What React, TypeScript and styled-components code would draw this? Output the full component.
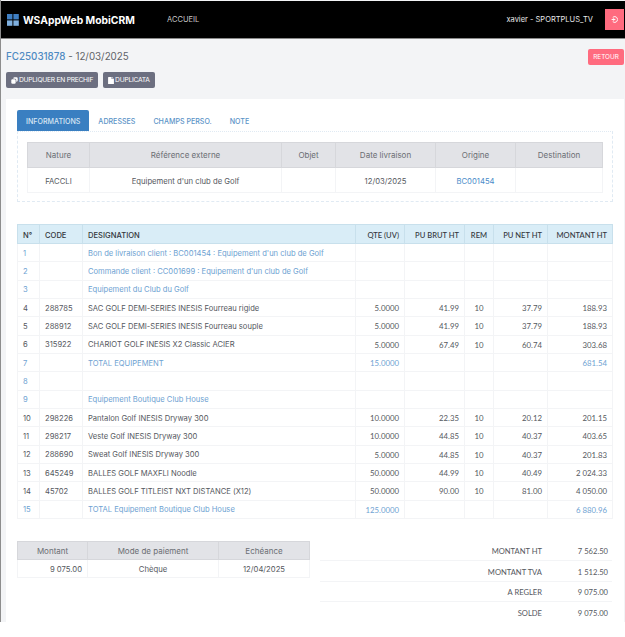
import React from 'react';
import styled, { createGlobalStyle } from 'styled-components';

type Align = 'left' | 'center' | 'right';

interface Line {
  n: number;
  code?: string;
  label?: string;
  qte?: string;
  brut?: string;
  rem?: string;
  net?: string;
  total?: string;
  link?: boolean;
}

const LINES: Line[] = [
  { n: 1, label: "Bon de livraison client : BC001454 : Equipement d'un club de Golf", link: true },
  { n: 2, label: "Commande client : CC001699 : Equipement d'un club de Golf", link: true },
  { n: 3, label: 'Equipement du Club du Golf', link: true },
  { n: 4, code: '288785', label: 'SAC GOLF DEMI-SERIES INESIS Fourreau rigide', qte: '5.0000', brut: '41.99', rem: '10', net: '37.79', total: '188.93' },
  { n: 5, code: '288912', label: 'SAC GOLF DEMI-SERIES INESIS Fourreau souple', qte: '5.0000', brut: '41.99', rem: '10', net: '37.79', total: '188.93' },
  { n: 6, code: '315922', label: 'CHARIOT GOLF INESIS X2 Classic ACIER', qte: '5.0000', brut: '67.49', rem: '10', net: '60.74', total: '303.68' },
  { n: 7, label: 'TOTAL EQUIPEMENT', qte: '15.0000', total: '681.54', link: true },
  { n: 8, link: true },
  { n: 9, label: 'Equipement Boutique Club House', link: true },
  { n: 10, code: '298226', label: 'Pantalon Golf INESIS Dryway 300', qte: '10.0000', brut: '22.35', rem: '10', net: '20.12', total: '201.15' },
  { n: 11, code: '298217', label: 'Veste Golf INESIS Dryway 300', qte: '10.0000', brut: '44.85', rem: '10', net: '40.37', total: '403.65' },
  { n: 12, code: '288690', label: 'Sweat Golf INESIS Dryway 300', qte: '5.0000', brut: '44.85', rem: '10', net: '40.37', total: '201.83' },
  { n: 13, code: '645249', label: 'BALLES GOLF MAXFLI Noodle', qte: '50.0000', brut: '44.99', rem: '10', net: '40.49', total: '2 024.33' },
  { n: 14, code: '45702', label: 'BALLES GOLF TITLEIST NXT DISTANCE (X12)', qte: '50.0000', brut: '90.00', rem: '10', net: '81.00', total: '4 050.00' },
  { n: 15, label: 'TOTAL Equipement Boutique Club House', qte: '125.0000', total: '6 880.96', link: true },
];

const TOTALS = [
  ['MONTANT HT', '7 562.50'],
  ['MONTANT TVA', '1 512.50'],
  ['A REGLER', '9 075.00'],
  ['SOLDE', '9 075.00'],
];

const INFO_COLUMNS = [62, 192, 54, 100, 80, 87];
const LINE_COLUMNS = [22, 43, 273, 49, 60, 29, 54, 65];
const PAYMENT_COLUMNS = [70, 131, 91];

function Columns({ widths }: { widths: number[] }) {
  return (
    <colgroup>
      {widths.map((width, index) => (
        <col key={index} width={width} />
      ))}
    </colgroup>
  );
}

export default function App() {
  return (
    <Page>
      <GlobalStyle />
      <TopBar>
        <Brand>
          <svg width="12" height="12" viewBox="0 0 12 12">
            <rect x="0" y="0" width="5.4" height="5.4" fill="#3f7fc4" />
            <rect x="6.4" y="0" width="5.4" height="5.4" fill="#3f7fc4" />
            <rect x="0" y="6.4" width="5.4" height="5.4" fill="#7fb0e0" />
            <rect x="6.4" y="6.4" width="5.4" height="5.4" fill="#7fb0e0" />
          </svg>
          WSAppWeb MobiCRM
        </Brand>
        <NavLink>ACCUEIL</NavLink>
        <UserName>xavier - SPORTPLUS_TV</UserName>
        <LogoutButton aria-label="Déconnexion">
          <svg width="7" height="7" viewBox="0 0 12 12" fill="none" stroke="#fff" strokeWidth="1.6">
            <path d="M3 2.2A5 5 0 1 1 3 9.8" />
            <path d="M1 6h6.5M5.5 4l-2.500 2 2.500 2" />
          </svg>
        </LogoutButton>
      </TopBar>
      <Content>
        <TitleRow>
          <Title>
            <strong>FC25031878</strong> - 12/03/2025
          </Title>
          <BackButton>RETOUR</BackButton>
        </TitleRow>
        <Actions>
          <ActionButton>
            <svg width="7" height="7" viewBox="0 0 12 12" fill="#fff">
              <rect x="0.5" y="4" width="7.5" height="7.5" rx="2" />
              <path d="M4 3V2.5A2 2 0 0 1 6 .5h3.500a2 2 0 0 1 2 2V6a2 2 0 0 1-2 2H9V5a2 2 0 0 0-2-2z" />
            </svg>
            DUPLIQUER EN PRECHIF
          </ActionButton>
          <ActionButton>
            <svg width="6" height="7" viewBox="0 0 10 12" fill="#fff">
              <path d="M1 0h5v3.500h4V12H0V1a1 1 0 0 1 1-1zM7 0l3 2.500H7z" />
            </svg>
            DUPLICATA
          </ActionButton>
        </Actions>
        <Card>
          <Tabs>
            <Tab $active>INFORMATIONS</Tab>
            <Tab>ADRESSES</Tab>
            <Tab>CHAMPS PERSO.</Tab>
            <Tab>NOTE</Tab>
          </Tabs>
          <TabPane>
            <GreyTable>
              <Columns widths={INFO_COLUMNS} />
              <thead>
                <tr>
                  <GreyHead $height={25}>Nature</GreyHead>
                  <GreyHead $height={25}>Référence externe</GreyHead>
                  <GreyHead $height={25}>Objet</GreyHead>
                  <GreyHead $height={25}>Date livraison</GreyHead>
                  <GreyHead $height={25}>Origine</GreyHead>
                  <GreyHead $height={25}>Destination</GreyHead>
                </tr>
              </thead>
              <tbody>
                <tr>
                  <GreyCell $height={25}>FACCLI</GreyCell>
                  <GreyCell $height={25}>Equipement d'un club de Golf</GreyCell>
                  <GreyCell $height={25} />
                  <GreyCell $height={25}>12/03/2025</GreyCell>
                  <GreyCell $height={25} $link>BC001454</GreyCell>
                  <GreyCell $height={25} />
                </tr>
              </tbody>
            </GreyTable>
          </TabPane>
          <LinesTable>
            <Columns widths={LINE_COLUMNS} />
            <thead>
              <tr>
                <LineHead>N°</LineHead>
                <LineHead>CODE</LineHead>
                <LineHead>DESIGNATION</LineHead>
                <LineHead $align="right">QTE (UV)</LineHead>
                <LineHead $align="right">PU BRUT HT</LineHead>
                <LineHead $align="center">REM</LineHead>
                <LineHead $align="right">PU NET HT</LineHead>
                <LineHead $align="right">MONTANT HT</LineHead>
              </tr>
            </thead>
            <tbody>
              {LINES.map((line) => (
                <LineRow key={line.n} $link={line.link}>
                  <LineCell>{line.n}</LineCell>
                  <LineCell>{line.code}</LineCell>
                  <LineCell>{line.label}</LineCell>
                  <LineCell $align="right" $number>{line.qte}</LineCell>
                  <LineCell $align="right" $number>{line.brut}</LineCell>
                  <LineCell $align="center" $number>{line.rem}</LineCell>
                  <LineCell $align="right" $number>{line.net}</LineCell>
                  <LineCell $align="right" $number>{line.total}</LineCell>
                </LineRow>
              ))}
            </tbody>
          </LinesTable>
          <Summary>
            <PaymentTable>
              <Columns widths={PAYMENT_COLUMNS} />
              <thead>
                <tr>
                  <GreyHead $height={18} $shifted>Montant</GreyHead>
                  <GreyHead $height={18} $shifted>Mode de paiement</GreyHead>
                  <GreyHead $height={18} $shifted>Echéance</GreyHead>
                </tr>
              </thead>
              <tbody>
                <tr>
                  <GreyCell $height={18} $align="right">9 075.00</GreyCell>
                  <GreyCell $height={18}>Chèque</GreyCell>
                  <GreyCell $height={18}>12/04/2025</GreyCell>
                </tr>
              </tbody>
            </PaymentTable>
            <Totals>
              {TOTALS.map(([label, value]) => (
                <TotalRow key={label}>
                  <TotalLabel>{label}</TotalLabel>
                  <TotalValue>{value}</TotalValue>
                </TotalRow>
              ))}
            </Totals>
          </Summary>
        </Card>
      </Content>
    </Page>
  );
}

const GlobalStyle = createGlobalStyle`
  html, body {
    margin: 0;
    padding: 0;
    background: #ffffff;
  }

  * {
    box-sizing: border-box;
  }
`;

const Page = styled.div`
  width: 625px;
  height: 622px;
  overflow: hidden;
  padding-top: 1px;
  border-left: 1px solid #8d8d8d;
  background: #f3f4f6;
  font-family: "Inter", "Liberation Sans", sans-serif;
  font-size: 7.7px;
  color: #55585e;
`;

const TopBar = styled.header`
  display: flex;
  align-items: center;
  height: 38px;
  padding: 0 1px 0 6px;
  background: #000000;
  border-bottom: 1px solid #8a8a8a;
`;

const Brand = styled.div`
  display: flex;
  align-items: center;
  gap: 4px;
  width: 160px;
  font-size: 10.3px;
  font-weight: 700;
  color: #ffffff;
`;

const NavLink = styled.a`
  font-size: 7.5px;
  color: #c8c8c8;
`;

const UserName = styled.span`
  margin-left: auto;
  margin-right: 12px;
  font-size: 7.5px;
  color: #e8e8e8;
`;

const LogoutButton = styled.button`
  display: flex;
  align-items: center;
  justify-content: center;
  width: 19px;
  height: 21px;
  padding: 0;
  border: 0;
  background: #ff6b7f;
`;

const Content = styled.main`
  padding: 10px 1px 0 5px;
`;

const TitleRow = styled.div`
  display: flex;
  justify-content: space-between;
  align-items: flex-start;
  height: 23px;
`;

const Title = styled.h1`
  margin: 1px 0 0;
  font-size: 9.8px;
  font-weight: 400;
  line-height: 14px;
  color: #5f6368;

  strong {
    font-weight: 500;
    color: #4f8ac2;
  }
`;

const BackButton = styled.button`
  width: 36px;
  height: 16px;
  padding: 0;
  border: 0;
  border-radius: 2px;
  background: #ff6b7f;
  font: 400 6.4px "Inter", sans-serif;
  color: #ffffff;
`;

const Actions = styled.div`
  display: flex;
  gap: 5px;
  height: 27px;
`;

const ActionButton = styled.button`
  display: flex;
  align-items: center;
  gap: 1px;
  height: 16px;
  padding: 0 5px;
  border: 0;
  border-radius: 2px;
  background: #6c6f80;
  font: 400 6.7px "Inter", sans-serif;
  letter-spacing: -0.25px;
  color: #ffffff;
`;

const Card = styled.section`
  height: 523px;
  padding: 11px 11px 0;
  background: #ffffff;
`;

const Tabs = styled.nav`
  display: flex;
  height: 21px;
`;

const Tab = styled.a<{ $active?: boolean }>`
  display: flex;
  align-items: center;
  padding: 1px 9px 0;
  border-radius: 2px 2px 0 0;
  background: ${(props) => (props.$active ? '#3a7fc1' : 'transparent')};
  font-size: 7.1px;
  font-weight: 500;
  color: ${(props) => (props.$active ? '#d8e6f3' : '#5b93c7')};
`;

const TabPane = styled.div`
  width: 596px;
  height: 71px;
  padding: 10px 9px;
  border: 1px dashed #e0eaf3;
  border-top-style: dotted;
`;

const BaseTable = styled.table`
  width: 595px;
  border-collapse: collapse;
  table-layout: fixed;
`;

const GreyTable = styled(BaseTable)`
  width: 575px;
`;

const PaymentTable = styled(BaseTable)`
  width: 292px;
  flex: none;
`;

const GreyHead = styled.th<{ $height: number; $shifted?: boolean }>`
  height: ${(props) => props.$height}px;
  padding: ${(props) => (props.$shifted ? '1px' : '0')} 3px 0;
  background: #e2e3e7;
  border: 1px solid #d6d7db;
  font-size: 8px;
  font-weight: 400;
  color: #6b6e73;
`;

const GreyCell = styled.td<{ $height: number; $align?: Align; $link?: boolean }>`
  height: ${(props) => props.$height}px;
  padding: 2px 5px 0;
  border: 1px solid #f3f4f6;
  text-align: ${(props) => props.$align ?? 'center'};
  color: ${(props) => (props.$link ? '#4a8cc9' : '#55585e')};
`;

const LinesTable = styled(BaseTable)`
  margin-top: 22px;
`;

const LineHead = styled.th<{ $align?: Align }>`
  height: 19px;
  padding: 2px 5px 0;
  background: #d9edf7;
  border: 1px solid #c8e0ec;
  font-family: ${(props) => (props.$align ? '"Lato"' : '"Inter"')}, sans-serif;
  font-size: 7.6px;
  font-weight: 500;
  text-align: ${(props) => props.$align ?? 'left'};
  color: #33363b;
`;

const LineRow = styled.tr<{ $link?: boolean }>`
  color: ${(props) => (props.$link ? '#6ea2d2' : '#55585e')};
`;

const LineCell = styled.td<{ $align?: Align; $number?: boolean }>`
  height: 18.33px;
  padding: 1px 5px 0;
  border: 1px solid #f3f4f6;
  font-family: ${(props) => (props.$number ? '"Lato"' : '"Inter"')}, sans-serif;
  font-size: ${(props) => (props.$number ? '7.8px' : '7.6px')};
  text-align: ${(props) => props.$align ?? 'left'};
  white-space: nowrap;
`;

const Summary = styled.div`
  display: flex;
  align-items: flex-start;
  gap: 10px;
  width: 595px;
  margin-top: 22px;
`;

const Totals = styled.div`
  flex: 1;
  font-family: "Lato", sans-serif;
  font-size: 7.6px;
`;

const TotalRow = styled.div`
  display: flex;
  align-items: center;
  height: 20.5px;
  padding-top: 1px;
  border-bottom: 1px solid #f3f4f6;

  &:last-child {
    border-bottom: 0;
  }
`;

const TotalLabel = styled.span`
  width: 222px;
  text-align: right;
`;

const TotalValue = styled.span`
  flex: 1;
  padding-right: 4px;
  text-align: right;
`;
